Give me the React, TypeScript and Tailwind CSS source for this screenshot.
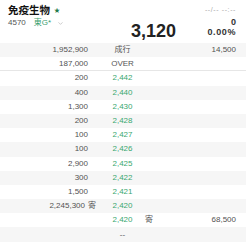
import { ChevronDown } from 'lucide-react';

type Row = {
  qty?: string;
  qtyTag?: string;
  mid: string;
  green?: boolean;
  tag?: string;
  right?: string;
  gray: boolean;
  line?: boolean;
};

const rows: Row[] = [
  { qty: '1,952,900', mid: '成行', right: '14,500', gray: true },
  { qty: '187,000', mid: 'OVER', gray: false, line: true },
  { qty: '200', mid: '2,442', green: true, gray: false },
  { qty: '400', mid: '2,440', green: true, gray: true },
  { qty: '1,300', mid: '2,430', green: true, gray: false },
  { qty: '200', mid: '2,428', green: true, gray: true },
  { qty: '100', mid: '2,427', green: true, gray: false },
  { qty: '100', mid: '2,426', green: true, gray: true },
  { qty: '2,900', mid: '2,425', green: true, gray: false },
  { qty: '300', mid: '2,422', green: true, gray: true },
  { qty: '1,500', mid: '2,421', green: true, gray: false },
  { qty: '2,245,300', qtyTag: '寄', mid: '2,420', green: true, gray: true },
  { mid: '2,420', green: true, tag: '寄', right: '68,500', gray: false },
  { mid: '--', gray: true },
];

export default function App() {
  return (
    <div
      className="w-[246px] h-[250px] overflow-hidden bg-white text-[#525252]"
      style={{ fontFamily: '"Liberation Sans", "Noto Sans CJK JP", sans-serif' }}
    >
      {/* Header */}
      <div className="flex h-[43px]">
        <div className="w-[131px] pl-[8px] pt-[3px]">
          <div className="flex items-center gap-[4px]">
            <span className="text-[10.5px] leading-[14px] font-bold text-[#111]">免疫生物</span>
            <span className="text-[6px] leading-none text-[#1f7a4a]">★</span>
          </div>
          <div className="flex items-center text-[8px] leading-[10px] mt-[1px]">
            <span className="text-[#555]">4570</span>
            <span className="ml-[8px] text-[#3aa070]">東G*</span>
            <ChevronDown className="ml-[6px] w-[7px] h-[7px] text-[#aaa]" strokeWidth={2} />
          </div>
        </div>
        <div className="pt-[20px]">
          <span className="text-[18px] leading-[18px] font-bold text-[#222]">3,120</span>
        </div>
        <div className="flex-1 pr-[10px] pt-[6px] text-right">
          <div className="text-[7px] leading-[8px] text-[#aaa] tracking-[0.6px]">--/-- --:--</div>
          <div className="text-[9px] leading-[10px] font-bold text-[#333] mt-[3px]">0</div>
          <div className="text-[9px] leading-[10px] font-semibold text-[#333] tracking-[0.6px]">0.00%</div>
        </div>
      </div>

      {/* Board */}
      <div className="text-[8px]">
        {rows.map((r, i) => (
          <div
            key={i}
            className={`flex items-center h-[14.2px] ${r.gray ? 'bg-[#f6f6f6]' : 'bg-white'} ${
              r.line ? 'border-b border-[#e6e6e6]' : ''
            }`}
          >
            <div className="w-[100px] flex items-center">
              <div className={`w-[88px] text-right ${r.qtyTag ? 'pr-[3px]' : ''}`}>{r.qty}</div>
              {r.qtyTag && <div>{r.qtyTag}</div>}
            </div>
            <div className={`w-[45px] text-center ${r.green ? 'text-[#3aa86f]' : 'text-[#555]'}`}>{r.mid}</div>
            <div className="flex-1 flex justify-between pr-[10px]">
              <span>{r.tag}</span>
              <span>{r.right}</span>
            </div>
          </div>
        ))}
      </div>
    </div>
  );
}
